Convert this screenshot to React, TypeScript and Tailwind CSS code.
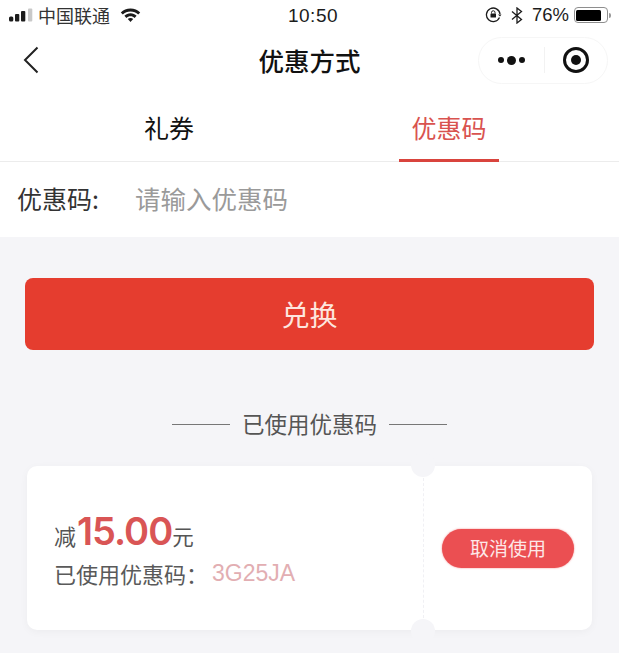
const font = "font-['Noto_Sans_CJK_SC','Liberation_Sans',sans-serif]";

function StatusBar() {
  return (
    <div className="flex h-[32px] items-center justify-between pb-[2px] pl-[9px] pr-[8px] text-[#1c1c1c]">
      <div className="flex w-[200px] items-center">
        <svg width="24" height="16" viewBox="0 0 24 16" fill="currentColor">
          <rect x="0" y="9.500" width="4.300" height="5" rx="1.500" />
          <rect x="6" y="7" width="4.300" height="7.500" rx="1" />
          <rect x="12" y="4" width="4.300" height="10.500" rx="1" />
          <rect x="19" y="1.500" width="4.300" height="13" rx="1" fill="#c9c9c9" />
        </svg>
        <span className="ml-[5px] text-[18px] leading-none text-[#333]">中国联通</span>
        <svg className="ml-[10px]" width="21" height="16" viewBox="0 0 21 16" fill="currentColor">
          <path d="M10.500 1.500C6.700 1.500 3.300 3 .8 5.400l2 2.100c2-1.900 4.700-3.100 7.700-3.100s5.700 1.200 7.700 3.100l2-2.100C17.700 3 14.300 1.500 10.500 1.500z" />
          <path d="M10.500 6.300c-2.400 0-4.500.9-6.100 2.500l2 2.100c1.100-1 2.500-1.700 4.100-1.700s3 .7 4.100 1.700l2-2.100c-1.600-1.600-3.700-2.500-6.100-2.500z" />
          <path d="M10.500 11c-1.100 0-2 .4-2.700 1.100l2.700 2.900 2.700-2.900c-.7-.7-1.600-1.100-2.700-1.100z" />
        </svg>
      </div>
      <span className="font-['Liberation_Sans',sans-serif] text-[19px] leading-none tracking-[0.5px]">10:50</span>
      <div className="flex w-[194px] items-center justify-end">
        <svg width="17" height="16" viewBox="0 0 17 16" fill="none" stroke="currentColor" strokeWidth="1.300">
          <path d="M14.500 10.500A6.800 6.800 0 1 1 15 7" />
          <path d="M13 7.500l2 2 1.500-2" fill="currentColor" stroke="none" />
          <rect x="5.500" y="6.500" width="5.500" height="4" rx=".6" fill="currentColor" stroke="none" />
          <path d="M6.500 6.500V5.500a1.700 1.700 0 0 1 3.500 0v1" strokeWidth="1" />
        </svg>
        <svg className="ml-[9px]" width="12" height="17" viewBox="0 0 12 17" fill="none" stroke="currentColor" strokeWidth="1.300">
          <path d="M1 4.500l9.500 8L6 16V1l4.500 3.500L1 12.500" />
        </svg>
        <span className="ml-[9px] font-['Liberation_Sans',sans-serif] text-[18.500px] leading-none">76%</span>
        <div className="ml-[5px] flex h-[16px] w-[34px] items-center rounded-[4px] border border-[#8e8e8e] p-[1.500px]">
          <div className="h-full w-[25px] rounded-[1.500px] bg-black" />
        </div>
        <div className="ml-[1px] h-[5px] w-[2px] rounded-r-full bg-[#999]" />
      </div>
    </div>
  );
}

function NavBar() {
  return (
    <div className="relative flex h-[56px] items-center justify-between pl-[23px] pr-[11px]">
      <svg width="16" height="28" viewBox="0 0 16 28" fill="none" stroke="#222" strokeWidth="2">
        <path d="M14.500 1.500L2 14l12.500 12.500" />
      </svg>
      <h1 className="absolute left-0 right-0 text-center text-[25.500px] font-medium leading-none text-[#111]">
        优惠方式
      </h1>
      <div className="flex h-[47px] w-[130px] items-center rounded-full border border-[#f6f6f6] bg-white">
        <div className="flex w-[65px] items-center justify-center gap-[3px]">
          <span className="size-[6px] rounded-full bg-[#111]" />
          <span className="size-[9px] rounded-full bg-[#111]" />
          <span className="size-[6px] rounded-full bg-[#111]" />
        </div>
        <div className="h-[26px] w-px bg-[#f2f2f2]" />
        <div className="flex flex-1 items-center justify-center">
          <div className="flex size-[26px] items-center justify-center rounded-full border-[3px] border-[#111]">
            <span className="size-[10px] rounded-full bg-[#111]" />
          </div>
        </div>
      </div>
    </div>
  );
}

function Tabs() {
  return (
    <div className="mt-[12px] flex h-[62px] border-b border-[#ececec] pl-[29px] text-[25px] leading-none">
      <div className="flex w-[280px] items-center justify-center pb-[6px] text-[#111]">礼券</div>
      <div className="relative flex w-[280px] items-center justify-center pb-[6px] text-[#d9534f]">
        优惠码
        <div className="absolute bottom-[-1px] left-[90px] h-[3px] w-[100px] bg-[#d9443d]" />
      </div>
    </div>
  );
}

function CouponCard() {
  return (
    <div className="relative mx-[27px] mt-[25px] flex h-[164px] w-[565px] rounded-[10px] bg-white shadow-[0_2px_8px_rgba(0,0,0,0.04)]">
      <div className="flex w-[396px] flex-col justify-center pl-[27px]">
        <div className="flex items-baseline text-[#555]">
          <span className="text-[22px] leading-none">减</span>
          <span className="ml-[1px] font-['Inter',sans-serif] text-[38px] font-semibold leading-[46px] tracking-[-1px] text-[#d95555]">
            15.00
          </span>
          <span className="text-[21.500px] leading-none">元</span>
        </div>
        <div className="mt-[4px] flex items-center text-[22px] leading-[30px] text-[#5a5a5a]">
          <span>已使用优惠码：</span>
          <span className="ml-[4px] font-['Liberation_Sans',sans-serif] text-[23px] text-[#e2aeb2]">3G25JA</span>
        </div>
      </div>
      <div className="my-[12px] border-l border-dashed border-[#f0f0f4]" />
      <div className="flex flex-1 items-center justify-end pr-[18px]">
        <div className="flex h-[39px] w-[132px] items-center justify-center rounded-full bg-[#eb4f52] text-[19px] text-[#fde8e8] shadow-[0_0_2px_rgba(237,81,85,0.7)]">
          取消使用
        </div>
      </div>
      <div className="absolute left-[384px] top-[-13px] size-[24px] rounded-full bg-[#f5f5f8]" />
      <div className="absolute bottom-[-13px] left-[384px] size-[24px] rounded-full bg-[#f5f5f8]" />
    </div>
  );
}

export default function App() {
  return (
    <div className={`${font} flex h-[653px] w-[619px] flex-col overflow-hidden bg-[#f5f5f8]`}>
      <div className="bg-white">
        <StatusBar />
        <NavBar />
        <Tabs />
        <div className="flex h-[75px] items-center pb-[3px] pl-[17px] text-[25px] leading-none">
          <span className="w-[118px] text-[#333]">优惠码:</span>
          <span className="text-[25.500px] text-[#9a9a9a]">请输入优惠码</span>
        </div>
      </div>
      <div className="mx-[25px] mt-[41px] flex h-[72px] w-[569px] shrink-0 items-center justify-center rounded-[8px] bg-[#e53d2f] text-[28px] text-[#fde6df]">
        兑换
      </div>
      <div className="mt-[57px] flex h-[34px] shrink-0 items-center justify-center gap-[12px] text-[22.500px] text-[#555]">
        <div className="h-px w-[58px] bg-[#777]" />
        <span>已使用优惠码</span>
        <div className="h-px w-[58px] bg-[#777]" />
      </div>
      <CouponCard />
    </div>
  );
}
